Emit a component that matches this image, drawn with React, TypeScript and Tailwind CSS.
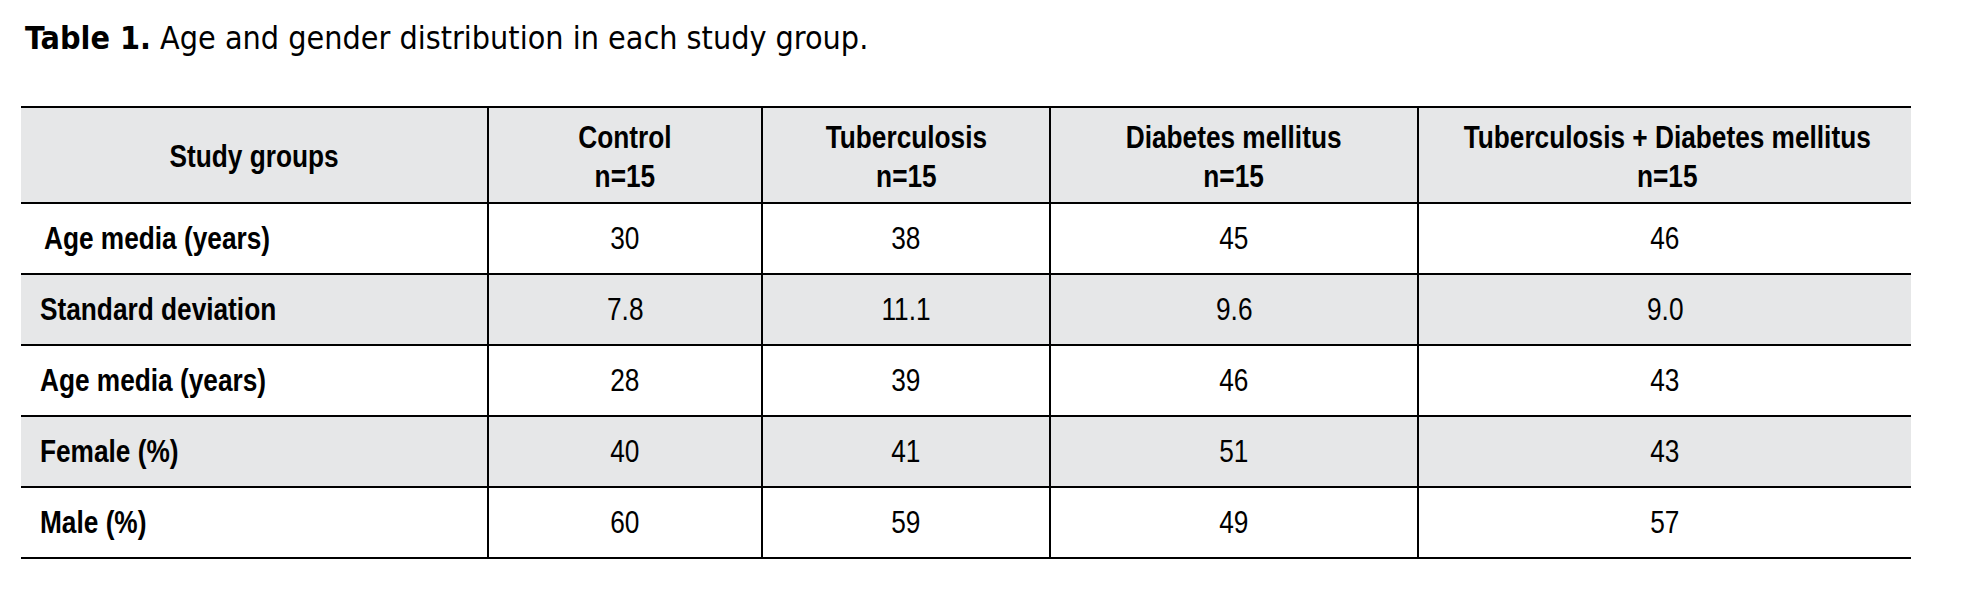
const headers = [
  { name: "Control", n: "n=15" },
  { name: "Tuberculosis", n: "n=15" },
  { name: "Diabetes mellitus", n: "n=15" },
  { name: "Tuberculosis + Diabetes mellitus", n: "n=15" },
];

const rows = [
  { label: "Age media (years)", values: ["30", "38", "45", "46"], shaded: false, indent: true },
  { label: "Standard deviation", values: ["7.8", "11.1", "9.6", "9.0"], shaded: true, indent: false },
  { label: "Age media (years)", values: ["28", "39", "46", "43"], shaded: false, indent: false },
  { label: "Female (%)", values: ["40", "41", "51", "43"], shaded: true, indent: false },
  { label: "Male (%)", values: ["60", "59", "49", "57"], shaded: false, indent: false },
];

// the print uses a condensed grotesque; no narrow face is installed, so squeeze Liberation Sans
const App = () => {
  return (
    <div className="min-h-screen bg-white text-black pl-[21px] pt-[19px]">
      <p className="pl-[4px] text-[32px] leading-[38px] font-['DejaVu_Sans_Condensed','DejaVu_Sans',sans-serif]">
        <span className="font-bold">Table 1.</span> Age and gender distribution in each study group.
      </p>
      <table className="mt-[49px] w-[1890px] table-fixed border-collapse font-['Liberation_Sans',Arial,sans-serif] text-[32px] leading-[39px]">
        <colgroup>
          <col className="w-[467px]" />
          <col className="w-[274px]" />
          <col className="w-[288px]" />
          <col className="w-[368px]" />
          <col className="w-[493px]" />
        </colgroup>
        <thead>
          <tr className="h-[96px] bg-[#e6e7e8] border-t-2 border-b-2 border-black">
            <th className="font-bold text-center align-middle pt-[3px]">
              <span className="inline-block whitespace-nowrap scale-x-[0.82]">Study groups</span>
            </th>
            {headers.map((h) => (
              <th key={h.name} className="font-bold text-center align-middle pt-[3px] border-l-2 border-black">
                <span className="inline-block whitespace-nowrap scale-x-[0.82]">
                  <span className="block">{h.name}</span>
                  <span className="block">{h.n}</span>
                </span>
              </th>
            ))}
          </tr>
        </thead>
        <tbody>
          {rows.map((r, i) => (
            <tr key={i} className={`h-[71px] border-b-2 border-black ${r.shaded ? "bg-[#e6e7e8]" : "bg-white"}`}>
              <td className={`font-bold text-left align-middle ${r.indent ? "pl-[23px]" : "pl-[19px]"}`}>
                <span className="inline-block whitespace-nowrap origin-left scale-x-[0.82]">{r.label}</span>
              </td>
              {r.values.map((v, j) => (
                <td key={j} className="font-normal text-center align-middle border-l-2 border-black">
                  <span className="inline-block scale-x-[0.82]">{v}</span>
                </td>
              ))}
            </tr>
          ))}
        </tbody>
      </table>
    </div>
  );
};

export default App;
